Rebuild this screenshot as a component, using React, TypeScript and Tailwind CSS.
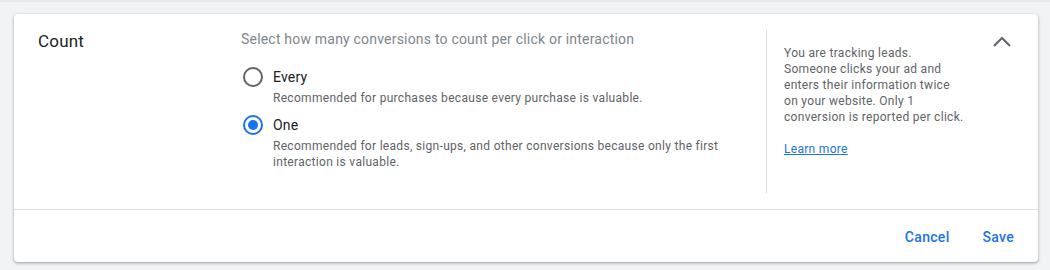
import React, { useState } from 'react';

const options = [
  {
    id: 'every',
    label: 'Every',
    description: 'Recommended for purchases because every purchase is valuable.',
  },
  {
    id: 'one',
    label: 'One',
    description:
      'Recommended for leads, sign-ups, and other conversions because only the first interaction is valuable.',
  },
];

const Radio = ({ checked }: { checked: boolean }) => (
  <span
    className={`w-5 h-5 shrink-0 rounded-full border-2 flex items-center justify-center ${
      checked ? 'border-[#1a73e8]' : 'border-[#5f6368]'
    }`}
  >
    {checked && <span className="w-[10px] h-[10px] rounded-full bg-[#1a73e8]" />}
  </span>
);

export default function App() {
  const [count, setCount] = useState('one');

  return (
    <div
      className="w-full h-[270px] bg-[#f1f3f4] pt-[14px] pl-[14px] pr-[12px] relative"
      style={{ fontFamily: 'Roboto, "Liberation Sans", sans-serif' }}
    >
      <div className="absolute top-0 left-0 right-0 h-[2px] bg-[#e6e7e9]" />
      <div className="bg-white rounded h-[248px] flex flex-col shadow-[0_1px_2px_rgba(60,64,67,0.3),0_1px_3px_1px_rgba(60,64,67,0.15)]">
        <div className="h-[196px] flex py-4 pl-6 pr-6 border-b border-[#dadce0]">
          <div className="w-[203px] shrink-0">
            <h2 className="text-[17px] leading-6 text-[#202124] tracking-[0.2px] -mt-[1px]">Count</h2>
          </div>

          <div className="w-[525px] shrink-0">
            <p className="text-[14px] leading-5 text-[#80868b] tracking-[0.2px] -mt-[1px]">
              Select how many conversions to count per click or interaction
            </p>
            <div className="mt-[18px] flex flex-col gap-[9px]">
              {options.map(opt => (
                <button
                  key={opt.id}
                  onClick={() => setCount(opt.id)}
                  className="flex items-start gap-[10px] text-left pl-[2px]"
                >
                  <Radio checked={count === opt.id} />
                  <div>
                    <p className="text-[14px] leading-5 text-[#202124] tracking-[0.2px]">{opt.label}</p>
                    <p className="mt-[3px] text-[12px] leading-4 text-[#5f6368] tracking-[0.3px] max-w-[455px]">
                      {opt.description}
                    </p>
                  </div>
                </button>
              ))}
            </div>
          </div>

          <div className="flex-1 flex justify-between border-l border-[#dadce0] pl-[17px]">
            <div className="w-[181px] pt-[15px] text-[12px] leading-4 text-[#5f6368] tracking-[0.3px]">
              <p>
                You are tracking leads. Someone clicks your ad and enters their information twice
                on your website. Only 1 conversion is reported per click.
              </p>
              <a href="#" className="block mt-4 text-[#1a73e8] underline">
                Learn more
              </a>
            </div>
            <button className="w-6 h-6 text-[#5f6368]" aria-label="Collapse">
              <svg viewBox="0 0 24 24" className="w-6 h-6" fill="none" stroke="currentColor" strokeWidth="2">
                <polyline points="4,16 12,8 20,16" />
              </svg>
            </button>
          </div>
        </div>

        <div className="flex-1 flex items-center justify-end gap-[17px] pr-4 pt-[2px]">
          <button className="px-2 py-1 text-[14px] font-medium text-[#1a73e8] tracking-[0.3px]">Cancel</button>
          <button className="px-2 py-1 text-[14px] font-medium text-[#1a73e8] tracking-[0.3px]">Save</button>
        </div>
      </div>
    </div>
  );
}
